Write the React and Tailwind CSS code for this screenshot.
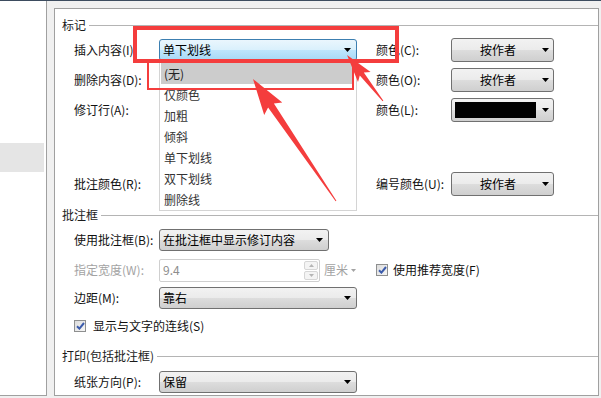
const arrowPts = (tx, ty, px, py, headLen, headW, tailW, neckW) => {
  const dx = px - tx;
  const dy = py - ty;
  const len = Math.hypot(dx, dy);
  const ux = dx / len;
  const uy = dy / len;
  const nx = -uy;
  const ny = ux;
  const bx = px - ux * headLen;
  const by = py - uy * headLen;
  const wx = bx - ux * 4;
  const wy = by - uy * 4;
  const pts = [
    [tx + (nx * tailW) / 2, ty + (ny * tailW) / 2],
    [bx + (nx * neckW) / 2, by + (ny * neckW) / 2],
    [wx + (nx * headW) / 2, wy + (ny * headW) / 2],
    [px, py],
    [wx - (nx * headW) / 2, wy - (ny * headW) / 2],
    [bx - (nx * neckW) / 2, by - (ny * neckW) / 2],
    [tx - (nx * tailW) / 2, ty - (ny * tailW) / 2],
  ];
  return pts.map((p) => p.map((v) => v.toFixed(1)).join(',')).join(' ');
};

const Tri = ({ color = '#000' }) => (
  <svg width="7" height="4" viewBox="0 0 7 4" className="shrink-0">
    <polygon points="0,0 7,0 3.5,4" fill={color} />
  </svg>
);

const Combo = ({ text, w, active }) => (
  <div
    className={`flex h-[22px] shrink-0 items-center justify-between rounded-[3px] border pl-[3px] pr-[5px] ${
      active
        ? 'border-[#3c7fb1] bg-[linear-gradient(#eaf6fd,#d9f0fc_50%,#bee6fd_50%,#a7d9f5)]'
        : 'border-[#707070] bg-[linear-gradient(#f2f2f2,#ebebeb_50%,#dddddd_50%,#cfcfcf)]'
    }`}
    style={{ width: w }}
  >
    <span>{text}</span>
    <Tri />
  </div>
);

const ColorBtn = ({ children, swatch }) => (
  <div className="flex h-[24px] w-[103px] shrink-0 items-center rounded-[3px] border border-[#707070] bg-[linear-gradient(#f2f2f2,#ebebeb_50%,#dddddd_50%,#cfcfcf)] pl-[2px] pr-[4px]">
    <div className={`flex flex-1 items-center ${swatch ? 'justify-start' : 'justify-center'}`}>{children}</div>
    <Tri />
  </div>
);

const Check = () => (
  <div className="flex h-[12px] w-[12px] shrink-0 items-center justify-center border border-[#8e8f8f] bg-[linear-gradient(135deg,#dcdcdc,#f6f6f6)]">
    <svg width="9" height="8" viewBox="0 0 9 8">
      <path d="M1 4.2 L3.4 6.6 L8 1" stroke="#3b5bab" strokeWidth="2" fill="none" />
    </svg>
  </div>
);

const Header = ({ children, mt }) => (
  <div className={`flex h-[24px] items-center pl-[7px] ${mt}`}>
    <span className="text-[#1b1b1b]">{children}</span>
    <div className="ml-[3px] h-px flex-1 bg-[#b4b4b4]" />
  </div>
);

const Row = ({ mt, children }) => (
  <div className={`flex h-[24px] items-center pl-[19px] ${mt}`}>{children}</div>
);

const Label = ({ children, w = 'w-[85px]', gray }) => (
  <span className={`${w} shrink-0 ${gray ? 'text-[#a3a3a3]' : 'text-[#111]'}`}>{children}</span>
);

const ITEMS = ['(无)', '仅颜色', '加粗', '倾斜', '单下划线', '双下划线', '删除线'];

export default function App() {
  return (
    <div className="relative h-[398px] w-[601px] overflow-hidden bg-[#f0f0f0] font-['Noto_Sans_CJK_SC',sans-serif] text-[12px] leading-none">
      <div className="h-px bg-[#3d4c5f]" />
      <div className="flex h-[395px]">
        <div className="h-[395px] w-[47px] shrink-0 border-r border-b border-[#a0a0a0] bg-white pt-[142px]">
          <div className="h-[29px] w-[44px] bg-[#e5e5e5]" />
        </div>
        <div className="w-[7px] shrink-0" />
        <div className="mt-[7px] h-[388px] w-[545px] shrink-0 border border-[#a0a0a0] bg-white">
          <Header mt="mt-[4px]">标记</Header>
          <Row mt="mt-[1px]">
            <Label>插入内容(I):</Label>
            <Combo text="单下划线" w={198} active />
            <Label w="ml-[19px] w-[75px]">颜色(C):</Label>
            <ColorBtn>按作者</ColorBtn>
          </Row>
          <Row mt="mt-[6px]">
            <Label>删除内容(D):</Label>
            <div className="w-[198px] shrink-0" />
            <Label w="ml-[19px] w-[75px]">颜色(O):</Label>
            <ColorBtn>按作者</ColorBtn>
          </Row>
          <Row mt="mt-[6px]">
            <Label>修订行(A):</Label>
            <div className="w-[198px] shrink-0" />
            <Label w="ml-[19px] w-[75px]">颜色(L):</Label>
            <ColorBtn swatch>
              <div className="ml-px h-[16px] w-[81px] bg-black" />
            </ColorBtn>
          </Row>
          <Row mt="mt-[50px]">
            <Label>批注颜色(R):</Label>
            <div className="w-[198px] shrink-0" />
            <Label w="ml-[19px] w-[75px]">编号颜色(U):</Label>
            <ColorBtn>按作者</ColorBtn>
          </Row>

          <Header mt="mt-[7px]">批注框</Header>
          <Row mt="mt-[1px]">
            <Label>使用批注框(B):</Label>
            <Combo text="在批注框中显示修订内容" w={170} />
          </Row>
          <Row mt="mt-[6px]">
            <Label gray>指定宽度(W):</Label>
            <div className="flex h-[23px] w-[161px] shrink-0 items-center rounded-[2px] border border-[#cfcfcf] pl-[3px] pr-px">
              <span className="flex-1 text-[#8d8d8d]">9.4</span>
              <div className="flex h-[19px] w-[14px] flex-col gap-px">
                <div className="flex flex-1 items-center justify-center rounded-[2px] border border-[#d6d6d6] bg-[#f4f4f4]">
                  <svg width="5" height="3" viewBox="0 0 5 3">
                    <polygon points="0,3 5,3 2.5,0" fill="#b5b5b5" />
                  </svg>
                </div>
                <div className="flex flex-1 items-center justify-center rounded-[2px] border border-[#d6d6d6] bg-[#f4f4f4]">
                  <svg width="5" height="3" viewBox="0 0 5 3">
                    <polygon points="0,0 5,0 2.5,3" fill="#b5b5b5" />
                  </svg>
                </div>
              </div>
            </div>
            <div className="flex w-[56px] shrink-0 items-center gap-[3px] pl-[4px] text-[#a3a3a3]">
              <span>厘米</span>
              <svg width="5" height="3" viewBox="0 0 5 3">
                <polygon points="0,0 5,0 2.5,3" fill="#a3a3a3" />
              </svg>
            </div>
            <Check />
            <span className="ml-[5px] text-[#111]">使用推荐宽度(F)</span>
          </Row>
          <Row mt="mt-[4px]">
            <Label>边距(M):</Label>
            <Combo text="靠右" w={198} />
          </Row>
          <Row mt="mt-[4px]">
            <Check />
            <span className="ml-[7px] text-[#111]">显示与文字的连线(S)</span>
          </Row>

          <Header mt="mt-[6px]">打印(包括批注框)</Header>
          <Row mt="mt-[2px]">
            <Label>纸张方向(P):</Label>
            <Combo text="保留" w={198} />
          </Row>
        </div>
      </div>

      {/* open dropdown list */}
      <div className="absolute left-[159px] top-[61px] h-[150px] w-[198px] border border-[#d4d4d4] bg-white py-px pl-px pr-[3px] text-[#333]">
        {ITEMS.map((it, i) => (
          <div
            key={it}
            className={`flex h-[21px] items-center pl-[3px] ${i === 0 ? 'bg-[#cccccc] text-[#222]' : ''}`}
          >
            {it}
          </div>
        ))}
      </div>

      {/* red annotations */}
      <svg className="pointer-events-none absolute inset-0" width="601" height="398">
        <rect x="135" y="28" width="262" height="33" stroke="#f43d3d" strokeWidth="4" fill="none" />
        <rect x="148" y="62" width="205" height="27" stroke="#f43d3d" strokeWidth="2" fill="none" />
        <polygon points={arrowPts(336, 201, 253, 79, 32, 22, 1, 7)} fill="#f43d3d" />
        <polygon points={arrowPts(383, 101, 347, 55, 24, 16, 1, 5)} fill="#f43d3d" />
      </svg>
    </div>
  );
}
